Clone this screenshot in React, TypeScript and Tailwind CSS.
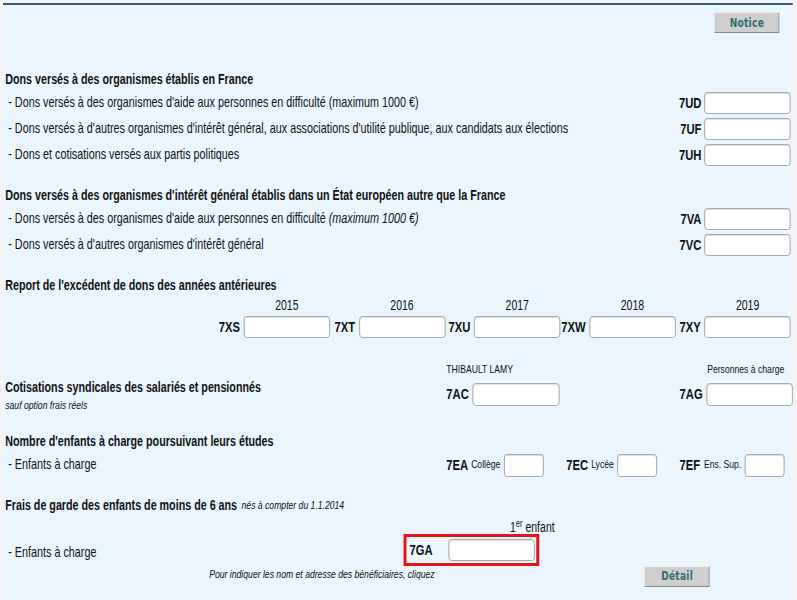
import * as React from "react";

// The form is laid out on a wider sheet and squeezed horizontally,
// the same way the reference capture is.
function Field({ className = "w-[115px]" }: { className?: string }) {
  return (
    <input
      type="text"
      className={`h-[22px] ${className} rounded-[4px] border border-[#9c9c9c] bg-white shadow-[inset_0_1px_1px_rgba(0,0,0,0.12)] outline-none`}
    />
  );
}

function Code({ children }: { children: React.ReactNode }) {
  return <span className="text-[15px] font-bold text-[#111]">{children}</span>;
}

function GrayButton({ children }: { children: React.ReactNode }) {
  return (
    <button
      type="button"
      className="h-[21px] w-[87px] border border-t-[#ededed] border-l-[#ededed] border-r-[#8a8a8a] border-b-[#8a8a8a] bg-[#cfcfcf] font-['DejaVu_Sans',sans-serif] text-[12px] font-bold tracking-[0.4px] text-[#2e6d72]"
    >
      {children}
    </button>
  );
}

function Heading({ children }: { children: React.ReactNode }) {
  return (
    <div className="flex h-[20px] items-center text-[14.3px] font-bold text-[#111]">{children}</div>
  );
}

function Line({ label, code }: { label: React.ReactNode; code: string }) {
  return (
    <div className="flex h-[26px] items-center">
      <span className="flex-1 text-[14.4px]">&nbsp;- {label}</span>
      <Code>{code}</Code>
      <Field className="ml-[4px] w-[115px]" />
    </div>
  );
}

const years = [
  ["2015", "7XS"],
  ["2016", "7XT"],
  ["2017", "7XU"],
  ["2018", "7XW"],
  ["2019", "7XY"],
];

export default function App() {
  return (
    <div className="h-[600px] w-[797px] overflow-hidden bg-[#f4f2f4]">
      <div className="h-[600px] w-[1062.67px] origin-top-left scale-x-[0.75] pt-[3px] font-['Liberation_Sans',Arial,sans-serif] text-[#111]">
        <div className="ml-[4px] mr-[5.33px] h-[597px] border-t-2 border-[#2a6176] bg-[#eaf5fd] px-[3px]">
          <div className="flex justify-end pr-[15px] pt-[7px]">
            <GrayButton>Notice</GrayButton>
          </div>

          <div className="mt-[37px]">
            <Heading>Dons versés à des organismes établis en France</Heading>
            <Line
              label="Dons versés à des organismes d'aide aux personnes en difficulté (maximum 1000 €)"
              code="7UD"
            />
            <Line
              label="Dons versés à d'autres organismes d'intérêt général, aux associations d'utilité publique, aux candidats aux élections"
              code="7UF"
            />
            <Line label="Dons et cotisations versés aux partis politiques" code="7UH" />
          </div>

          <div className="mt-[18px]">
            <Heading>
              Dons versés à des organismes d'intérêt général établis dans un État européen autre que la France
            </Heading>
            <Line
              label={
                <>
                  Dons versés à des organismes d'aide aux personnes en difficulté{" "}
                  <i>(maximum 1000 €)</i>
                </>
              }
              code="7VA"
            />
            <Line label="Dons versés à d'autres organismes d'intérêt général" code="7VC" />
          </div>

          <div className="mt-[18px]">
            <Heading>Report de l'excédent de dons des années antérieures</Heading>
            <div className="flex h-[18px] items-center justify-end">
              {years.map(([y]) => (
                <div key={y} className="flex w-[153.6px] justify-end">
                  <span className="w-[115px] text-center text-[14px]">{y}</span>
                </div>
              ))}
            </div>
            <div className="flex h-[26px] items-center justify-end">
              {years.map(([y, c]) => (
                <div key={c} className="flex w-[153.6px] items-center justify-end">
                  <Code>{c}</Code>
                  <Field className="ml-[5px] w-[115px]" />
                </div>
              ))}
            </div>
          </div>

          <div className="mt-[22px] grid grid-cols-[588px_311px_1fr]">
            <div />
            <div className="flex h-[16px] items-center text-[11.5px]">THIBAULT LAMY</div>
            <div className="flex h-[16px] items-center justify-end pr-[11px] text-[11.5px]">
              Personnes à charge
            </div>
            <div>
              <Heading>Cotisations syndicales des salariés et pensionnés</Heading>
              <div className="text-[11.5px] italic leading-[14px]">sauf option frais réels</div>
            </div>
            <div className="flex items-center self-start pt-[5px]">
              <Code>7AC</Code>
              <Field className="ml-[5px] h-[23px] w-[116px]" />
            </div>
            <div className="flex items-center self-start pt-[5px]">
              <Code>7AG</Code>
              <Field className="ml-[5px] h-[23px] w-[115px]" />
            </div>
          </div>

          <div className="mt-[20px]">
            <Heading>Nombre d'enfants à charge poursuivant leurs études</Heading>
            <div className="grid h-[26px] grid-cols-[588px_311px_1fr] items-center">
              <span className="text-[14.4px]">&nbsp;- Enfants à charge</span>
              <div className="flex items-center">
                <div className="flex w-[160px] items-center">
                  <Code>7EA</Code>
                  <span className="ml-[4px] text-[11.5px]">Collège</span>
                  <Field className="ml-[5px] h-[23px] w-[53px]" />
                </div>
                <div className="flex items-center">
                  <Code>7EC</Code>
                  <span className="ml-[4px] text-[11.5px]">Lycée</span>
                  <Field className="ml-[5px] h-[23px] w-[53px]" />
                </div>
              </div>
              <div className="flex items-center">
                <Code>7EF</Code>
                <span className="ml-[5px] text-[11.5px]">Ens. Sup.</span>
                <Field className="ml-[5px] h-[23px] w-[53px]" />
              </div>
            </div>
          </div>

          <div className="mt-[18px]">
            <Heading>
              Frais de garde des enfants de moins de 6 ans
              <span className="ml-[6px] text-[11.5px] font-normal italic">nés à compter du 1.1.2014</span>
            </Heading>
            <div className="flex h-[18px] items-end pl-[673px] text-[14px] leading-[14px]">
              <span>
                1<sup className="text-[10px]">er</sup> enfant
              </span>
            </div>
            <div className="flex h-[32px] items-center">
              <span className="w-[531px] pt-[6px] text-[14.4px]">&nbsp;- Enfants à charge</span>
              <div className="flex h-[32px] w-[181px] items-center border-x-4 border-y-[3px] border-[#e8151b] pl-[4px]">
                <Code>7GA</Code>
                <Field className="ml-[21px] w-[115px]" />
              </div>
            </div>
            <div className="flex h-[18px] items-center">
              <span className="ml-[272px] text-[11.5px] italic">
                Pour indiquer les nom et adresse des bénéficiaires, cliquez
              </span>
              <div className="ml-auto mr-[108px]">
                <GrayButton>Détail</GrayButton>
              </div>
            </div>
          </div>
        </div>
      </div>
    </div>
  );
}
